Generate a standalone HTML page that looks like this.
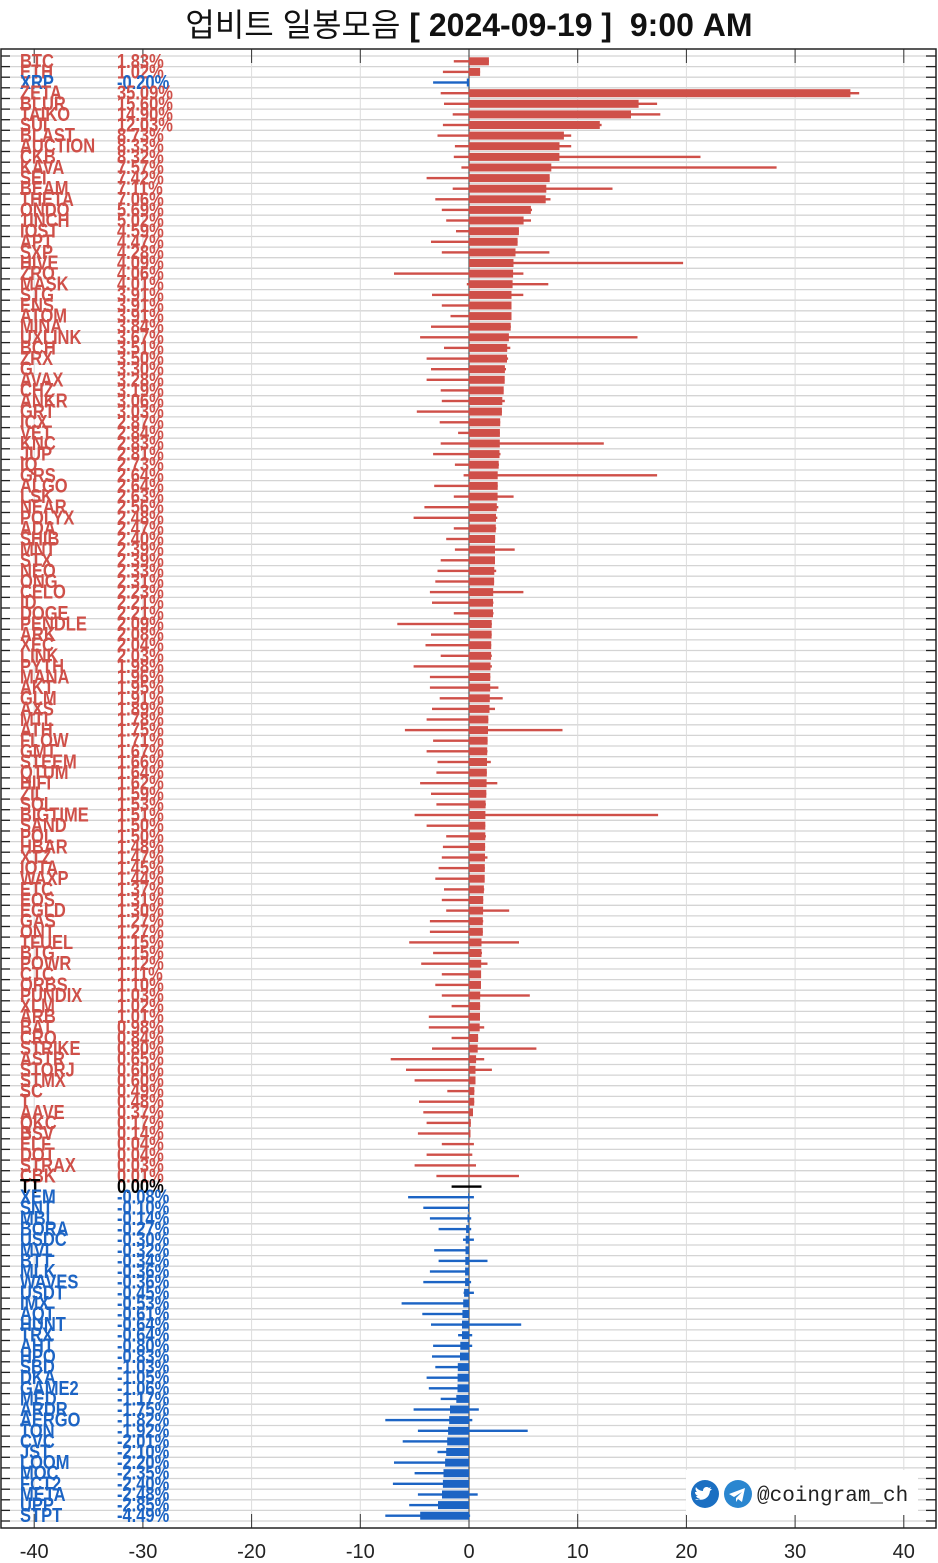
<!DOCTYPE html>
<html><head><meta charset="utf-8"><style>
html,body{margin:0;padding:0;background:#fff;width:938px;height:1563px;overflow:hidden}
#t{position:absolute;left:0;top:3px;width:938px;text-align:center;font-size:32px;line-height:44px;color:#111;font-family:"Liberation Sans","Noto Sans CJK KR",sans-serif;white-space:pre}
#t b{font-weight:bold}
svg{position:absolute;left:0;top:0}
</style></head><body>
<div id="t">업비트 일봉모음 <b>[ 2024-09-19 ]  9:00 AM</b></div>
<svg id="s" width="938" height="1563" xmlns="http://www.w3.org/2000/svg" font-family="Liberation Sans, sans-serif"></svg>
<script>
var D=[["BTC",1.83,-1.4],["ETH",1.02,-2.4],["XRP",-0.20,-3.3,0],["ZETA",35.09,-2.6,35.9],["BLUR",15.60,-2.3,17.3],["TAIKO",14.90,-1.5,17.6],["SUI",12.03,-2.4,12.2],["BLAST",8.73,-2.9,9.4],["AUCTION",8.33,-1.3,9.4],["CKB",8.32,-1.4,21.3],["KAVA",7.57,-0.7,28.3],["SEI",7.42,-3.9],["BEAM",7.11,-1.5,13.2],["THETA",7.06,-3.1,7.5],["ONDO",5.69,-2.5,5.8],["1INCH",5.02,-2.1,5.7],["IOST",4.59,-1.2],["APT",4.47,-3.5],["SXP",4.28,-2.5,7.4],["HIVE",4.09,0,19.7],["ZRO",4.06,-6.9,5.0],["MASK",4.01,-0.2,7.3],["STG",3.91,-3.4,5.0],
["ENS",3.91,-2.5],["ATOM",3.91,-1.7],["MINA",3.84,-3.5],["UXLINK",3.67,-4.5,15.5],["BCH",3.51,-2.3,3.8],["ZRX",3.50,-3.9,3.6],["G",3.30,-3.5,3.4],["AVAX",3.28,-3.9],["CHZ",3.19,-2.6],["ANKR",3.06,-2.5,3.3],["GRT",3.03,-4.8],["ICX",2.87,-2.7],["VET",2.84,-1.0],["KNC",2.83,-2.6,12.4],["JUP",2.81,-3.3,2.9],["IQ",2.73,-1.3,2.75],["GRS",2.64,-0.5,17.3],["ALGO",2.64,-3.2],["LSK",2.63,-1.4,4.1],["NEAR",2.56,-4.1,2.7],["POLYX",2.48,-5.1,2.6],["ADA",2.47,-1.4,2.5],["SHIB",2.40,-2.1],
["MNT",2.39,-1.3,4.2],["STX",2.39,-2.6],["NEO",2.33,-2.9,2.5],["ONG",2.31,-3.1],["CELO",2.23,-3.6,5.0],["ID",2.21,-3.4,2.25],["DOGE",2.21,-1.4,2.25],["PENDLE",2.09,-6.6],["ARK",2.08,-3.5],["XEC",2.04,-4.0],["LINK",2.03,-2.6,2.1],["PYTH",1.98,-5.1,2.1],["MANA",1.96,-3.6],["AKT",1.95,-3.6,2.7],["GLM",1.91,-2.7,3.1],["AXS",1.89,-3.4,2.4],["MTL",1.78,-3.9],["ATH",1.75,-5.9,8.6],["FLOW",1.71,-3.3],["GMT",1.67,-3.9,1.7],["STEEM",1.66,-2.9,2.0],["QTUM",1.64,-3.0],["HIFI",1.62,-4.5,2.6],["ZIL",1.59,-3.5],["SOL",1.53,-3.0,1.55],["BIGTIME",1.51,-5.0,17.4],
["SAND",1.50,-3.9],["POL",1.50,-2.1,1.55],["HBAR",1.48,-2.4],["XTZ",1.47,-2.5,1.7],["IOTA",1.45,-2.8],["WAXP",1.44,-3.1],["ETC",1.37,-2.3,1.4],["EOS",1.31,-2.5],["EGLD",1.30,-2.1,3.7],["GAS",1.27,-3.6,1.3],["ONT",1.27,-3.6],["TFUEL",1.15,-5.5,4.6],["BTG",1.15,-3.3,1.2],["POWR",1.12,-4.4,1.7],["CTC",1.11,-2.5],["ORBS",1.10,-3.1],["PUNDIX",1.03,-2.5,5.6],["XLM",1.02,-1.6],["ARB",1.01,-3.7],["BAT",0.98,-3.7,1.4],["CRO",0.84,-1.6],["STRIKE",0.80,-3.4,6.2],["ASTR",0.65,-7.2,1.4],["STORJ",0.60,-5.8,2.1],["STMX",0.60,-5.0],["SC",0.49,-2.0],
["T",0.48,-4.6],["AAVE",0.37,-4.2],["QKC",0.17,-3.9],["BSV",0.14,-4.7],["ELF",0.04,-2.5,0.45],["DOT",0.04,-3.9,0.3],["STRAX",0.03,-5.0,0.65],["CBK",0.01,-3.0,4.6],["TT",0.00,-1.6,1.15],["XEM",-0.08,-5.6,0.45],["SNT",-0.10,-4.2,0],["MBL",-0.14,-3.6,0.2],["BORA",-0.27,-2.8,0.2],["USDC",-0.30,-0.55,0.45],["MVL",-0.32,-3.2,0],["BTT",-0.34,-2.8,1.7],["MLK",-0.36,-3.6,0],["WAVES",-0.36,-4.2,0.2],["USDT",-0.45,-0.5,0.45],["IMX",-0.53,-6.2,0],["AQT",-0.61,-4.3,0],["HUNT",-0.64,-3.5,4.8],["TRX",-0.64,-1.0,0.3],["AHT",-0.80,-3.3,0.3],["HPO",-0.83,-3.4,0],["SBD",-1.03,-3.1,0],["DKA",-1.05,-3.9,0],["GAME2",-1.06,-3.7,0],
["MED",-1.17,-2.6,0],["ARDR",-1.75,-5.1,0.9],["AERGO",-1.82,-7.7,0.3],["TON",-1.92,-4.7,5.4],["CVC",-2.01,-6.1,0],["JST",-2.10,-2.9,0],["LOOM",-2.20,-6.9,0],["MOC",-2.35,-5.0,0],["FCT2",-2.40,-7.0,0],["META",-2.48,-4.7,0.8],["UPP",-2.85,-5.5,0],["STPT",-4.49,-7.7,0.1]];
var s=document.getElementById("s"),o="";
function X(v){return 469+v*10.87}
var T0=56,RH=(1521-56)/138,TOP=49,BOT=1528;
o+='<rect x="1" y="'+TOP+'" width="935" height="'+(BOT-TOP)+'" fill="#fff"/>';
for(var i=0;i<=138;i++){var y=(T0+i*RH).toFixed(1);o+='<line x1="1" x2="936" y1="'+y+'" y2="'+y+'" stroke="#d4d4d4" stroke-width="1.3"/>';o+='<line x1="1" x2="10" y1="'+y+'" y2="'+y+'" stroke="#222" stroke-width="1.3"/><line x1="926" x2="936" y1="'+y+'" y2="'+y+'" stroke="#222" stroke-width="1.3"/>';}
for(var k=-4;k<=4;k++){var x=X(k*10).toFixed(1);o+='<line x1="'+x+'" x2="'+x+'" y1="'+TOP+'" y2="'+BOT+'" stroke="#dcdcdc" stroke-width="1"/>';o+='<line x1="'+x+'" x2="'+x+'" y1="'+TOP+'" y2="'+(TOP+14)+'" stroke="#333" stroke-width="1"/><line x1="'+x+'" x2="'+x+'" y1="'+(BOT-14)+'" y2="'+BOT+'" stroke="#333" stroke-width="1"/>';o+='<text x="'+x+'" y="1558" font-size="20" text-anchor="middle" fill="#222">'+(k*10)+'</text>';}
o+='<line x1="469" x2="469" y1="'+TOP+'" y2="'+BOT+'" stroke="#333" stroke-width="1"/>';
for(var i=0;i<D.length;i++){var d=D[i],v=d[1],c=v>0?"#cf5049":(v<0?"#1c64c4":"#000"),cy=T0+(i+0.5)*RH;
var lo=d[2],hi=d.length>3?d[3]:(v>0?v:0);
o+='<rect x="'+X(lo).toFixed(1)+'" y="'+(cy-1.2).toFixed(1)+'" width="'+(X(hi)-X(lo)).toFixed(1)+'" height="2.4" fill="'+c+'"/>';
if(v!=0){var a=Math.min(X(0),X(v)),b=Math.max(X(0),X(v));o+='<rect x="'+a.toFixed(1)+'" y="'+(cy-4).toFixed(1)+'" width="'+(b-a).toFixed(1)+'" height="8" fill="'+c+'"/>';}
var ty=(cy+6.5).toFixed(1);
o+='<text transform="translate(20,'+ty+') scale(1,1.22)" font-size="16.5" font-weight="bold" fill="'+c+'">'+d[0]+'</text>';
o+='<text transform="translate(117,'+ty+') scale(1,1.22)" font-size="16.5" font-weight="bold" fill="'+c+'">'+v.toFixed(2)+'%</text>';}
o+='<rect x="686" y="1470" width="232" height="45" fill="#fff"/>';
o+='<circle cx="705" cy="1494" r="14" fill="#1b6fc2"/><path d="M697 1499c5 2 12 0 13-8l2-2-2 0 1-2-2 1c-2-2-6-1-6 3-3 0-6-2-7-4-1 2 0 4 1 5l-2 0c0 2 1 3 3 4l-2 0c1 2 2 2 4 3-2 1-3 1-5 0z" fill="#fff"/>';
o+='<circle cx="738" cy="1494" r="14" fill="#2a86d0"/><path d="M729 1494l16-6-3 14-4-3-2 3 0-4 6-6-8 5z" fill="#fff"/>';
o+='<text x="757" y="1501" font-size="21" font-family="Liberation Mono, monospace" fill="#222">@coingram_ch</text>';
o+='<rect x="1" y="'+TOP+'" width="935" height="'+(BOT-TOP)+'" fill="none" stroke="#222" stroke-width="1.5"/>';
s.innerHTML=o;
</script>
</body></html>
